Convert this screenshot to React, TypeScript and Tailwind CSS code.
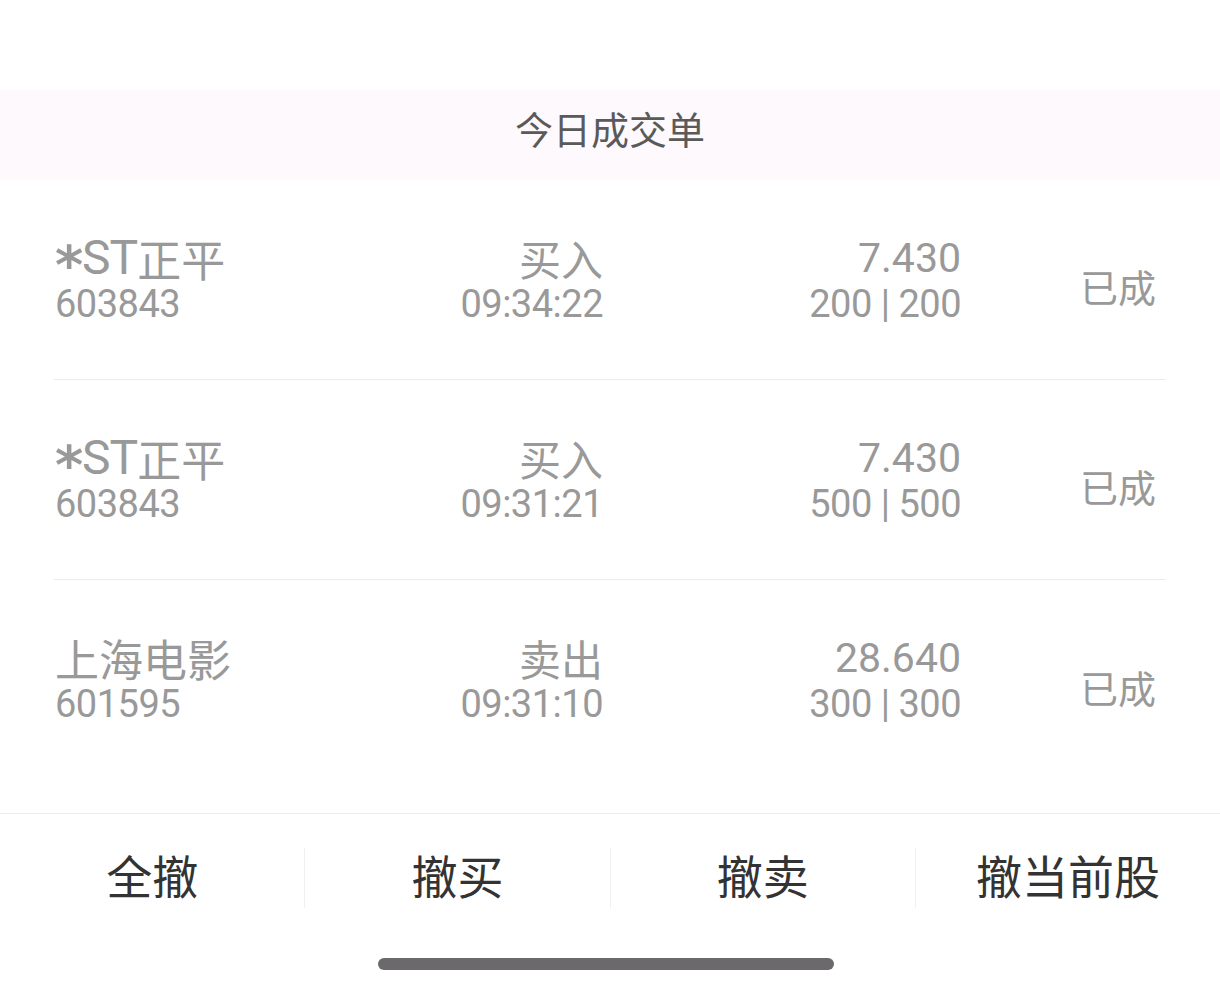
import React from 'react';

type Deal = {
  name: string;
  code: string;
  side: string;
  time: string;
  price: string;
  qty: string;
  status: string;
};

const DEALS: Deal[] = [
  { name: '*ST正平', code: '603843', side: '买入', time: '09:34:22', price: '7.430', qty: '200 | 200', status: '已成' },
  { name: '*ST正平', code: '603843', side: '买入', time: '09:31:21', price: '7.430', qty: '500 | 500', status: '已成' },
  { name: '上海电影', code: '601595', side: '卖出', time: '09:31:10', price: '28.640', qty: '300 | 300', status: '已成' },
];

const CJK = { fontFamily: '"Noto Sans CJK SC", "Noto Sans", sans-serif' };
const NUM = { fontFamily: 'Roboto, "Noto Sans CJK SC", sans-serif' };

// 名称里的 *ST 前缀用更大的拉丁字体，跟截图里的 DIN 风格更接近
function StockName({ name }: { name: string }) {
  const m = name.match(/^(\*?)([A-Z]*)(.*)$/);
  const star = m ? m[1] : '';
  const latin = m ? m[2] : '';
  const rest = m ? m[3] : name;
  return (
    <div className="h-[42px] flex items-end text-[44px] leading-[42px] text-[#999999] whitespace-nowrap" style={CJK}>
      {star ? (
        <span
          className="inline-block w-[27px] text-[54px] leading-[42px] font-bold translate-y-[8px]"
          style={{ fontFamily: '"DejaVu Sans", sans-serif' }}
        >
          {star}
        </span>
      ) : null}
      {latin ? (
        <span className="text-[48px] leading-[42px] tracking-[-1px]" style={NUM}>
          {latin}
        </span>
      ) : null}
      <span>{rest}</span>
    </div>
  );
}

function DealRow({ d, last }: { d: Deal; last: boolean }) {
  return (
    <div className={`h-[200px] flex items-center ${last ? '' : 'border-b border-[#ececec]'}`}>
      <div className="w-[300px] pl-px">
        <StockName name={d.name} />
        <div className="mt-[6px] text-[38px] leading-[38px] tracking-[-0.5px] text-[#999999]" style={NUM}>
          {d.code}
        </div>
      </div>
      <div className="w-[249px] text-right">
        <div className="h-[42px] text-[42px] leading-[42px] text-[#999999]" style={CJK}>
          {d.side}
        </div>
        <div className="mt-[6px] text-[38px] leading-[38px] tracking-[-0.5px] text-[#999999]" style={NUM}>
          {d.time}
        </div>
      </div>
      <div className="w-[358px] text-right">
        <div className="h-[42px] text-[41px] leading-[42px] text-[#999999]" style={NUM}>
          {d.price}
        </div>
        <div className="mt-[6px] text-[38px] leading-[38px] tracking-[-0.5px] text-[#999999]" style={NUM}>
          {d.qty}
        </div>
      </div>
      <div className="flex-1 text-right pr-[10px] pt-[12px] text-[38px] text-[#999999]" style={CJK}>
        {d.status}
      </div>
    </div>
  );
}

export default function App() {
  const actions = ['全撤', '撤买', '撤卖', '撤当前股'];
  return (
    <div className="w-[1220px] h-[988px] bg-white flex flex-col">
      <div className="h-[90px]" />
      <div className="h-[90px] bg-[#fdf9fc] flex items-center justify-center">
        <span className="mb-[14px] text-[38px] leading-[48px] text-[#5a5a5a]" style={CJK}>
          今日成交单
        </span>
      </div>
      <div className="px-[54px] h-[633px]">
        {DEALS.map((d, i) => (
          <DealRow key={i} d={d} last={i === DEALS.length - 1} />
        ))}
      </div>
      <div className="border-t border-[#ececec] h-[128px] flex items-center">
        {actions.map((a, i) => (
          <div
            key={a}
            className={`flex-1 h-[60px] flex items-center justify-center text-[46px] text-[#333333] ${
              i > 0 ? 'border-l border-[#f0f0f0]' : ''
            }`}
            style={CJK}
          >
            <span className="mb-[6px]">{a}</span>
          </div>
        ))}
      </div>
      <div className="flex justify-center pt-[17px]">
        <div className="mr-[8px] w-[456px] h-[12px] rounded-full bg-[#6b696c]" />
      </div>
    </div>
  );
}
